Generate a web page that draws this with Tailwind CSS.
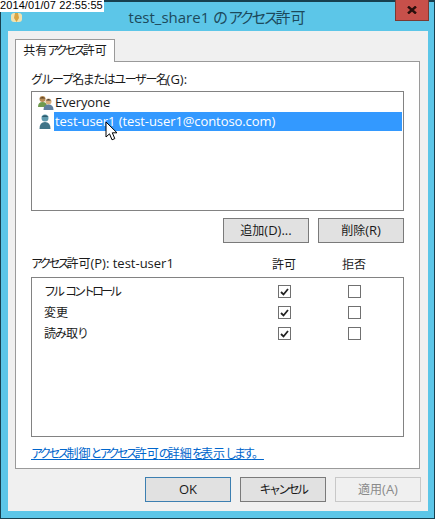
<!DOCTYPE html>
<html lang="ja">
<head>
    <meta charset="UTF-8">
    <title>test_share1 のアクセス許可</title>
    <script src="https://cdn.jsdelivr.net/npm/@tailwindcss/browser@4"></script>
</head>
<body class="w-[435px] h-[519px] overflow-hidden bg-[#5cc6e8] font-['Open_Sans','Noto_Sans_CJK_JP',sans-serif] text-[12px] text-[#1a1a1a]">
    <!-- timestamp burned into the capture -->
    <div class="absolute left-0 top-0 z-10 h-[12px] w-[104px] bg-white font-['Liberation_Sans',sans-serif] text-[11px] leading-[11px] tracking-[0.1px] text-black whitespace-nowrap">2014/01/07 22:55:55</div>

    <div class="relative flex h-[519px] w-[435px] flex-col border border-[#17404f] border-t-2 pb-[7px] pl-[7px] pr-[6px]">
        <!-- title bar -->
        <div class="relative flex h-[29px] shrink-0 items-center justify-center">
            <svg class="absolute left-[2px] top-[10px]" width="13" height="11" viewBox="0 0 13 11">
                <path d="M1 3q1-2 3-2h5q2 0 3 2v4q0 3-3 3H4q-3 0-3-3z" fill="#f0e2b0"/>
                <path d="M5 1h3l1 5-2.500 4L4 6z" fill="#d9a441"/>
            </svg>
            <span class="ml-[-2px] mt-[1px] whitespace-nowrap text-[15px] text-[#1c4a5c]">test_share1 の<span class="tracking-[-3px]">アクセス</span>許可</span>
            <div class="absolute right-[-1px] top-[-2px] flex h-[21px] w-[34px] items-center justify-center border border-[#7a3a32] border-t-0 bg-[#c7504a]">
                <svg width="10" height="8" viewBox="0 0 10 8"><path d="M1 .5l8 7M9 .5l-8 7" stroke="#2a0f0c" stroke-width="2.400"/></svg>
            </div>
        </div>

        <!-- client area -->
        <div class="flex min-h-0 flex-1 flex-col bg-[#f0f0f0] px-[7px] pt-[8px]">
            <div class="relative z-[1] mb-[-1px] flex h-[23px] w-[100px] items-center justify-center whitespace-nowrap border border-b-0 border-[#9a9a9a] bg-white">共有<span class="tracking-[-3px]">アクセス</span>許可</div>

            <div class="flex h-[408px] w-[405px] shrink-0 flex-col border border-[#9a9a9a] bg-white px-[15px]">
                <div class="mt-[7px] h-[21px] whitespace-nowrap leading-[20px]"><span class="tracking-[-1.5px]">グループ名またはユーザー名</span><span class="text-[13px]">(G):</span></div>

                <!-- group list -->
                <div class="relative mt-[1px] h-[120px] w-[373px] shrink-0 border border-[#828282] pl-[5px] pt-[1px]">
                    <div class="flex h-[19px] items-center">
                        <svg width="17" height="16" viewBox="0 0 17 16">
                            <circle cx="5.500" cy="4" r="3" fill="#b98d55"/>
                            <path d="M1 12q0-5 4.500-5t4.500 5z" fill="#6f9a4e"/>
                            <circle cx="11.500" cy="6.500" r="3" fill="#d9ae7c"/>
                            <path d="M2.500 3.500q3-3 6 0z" fill="#5c4326"/>
                            <path d="M9 5.500q2.500-3 5 0z" fill="#3d3a36"/>
                            <path d="M6.500 15q0-5.500 5-5.500t5 5.500z" fill="#5f7f9e"/>
                        </svg>
                        <span class="ml-[1px] text-[13px] leading-[19px] tracking-[-0.1px]">Everyone</span>
                    </div>
                    <div class="flex h-[19px] items-center">
                        <svg width="17" height="18" viewBox="0 0 17 18">
                            <circle cx="8" cy="5" r="3.500" fill="#5d9aae"/>
                            <path d="M4.500 4q3.500-3.500 7 0z" fill="#2f5a6c"/>
                            <path d="M2.500 16q0-7 5.500-7t5.500 7z" fill="#3f7488"/>
                        </svg>
                        <span class="h-[19px] w-[348px] bg-[#3399ff] pl-[1px] text-[13px] leading-[18px] tracking-[-0.08px] text-white">test-user1 (test-user1@contoso.com)</span>
                    </div>
                    <!-- mouse cursor -->
                    <svg class="absolute left-[73px] top-[29px]" width="14" height="21" viewBox="0 0 14 21">
                        <path d="M1 1v15l3.500-3.200 2.500 6 2.800-1.200-2.500-5.800h4.700z" fill="white" stroke="black" stroke-width="1"/>
                    </svg>
                </div>

                <div class="mt-[7px] flex justify-end gap-[9px]">
                    <button class="h-[25px] w-[86px] border border-[#7a7a7a] bg-[#e1e1e1]">追加<span class="text-[13px]">(D)...</span></button>
                    <button class="h-[25px] w-[86px] border border-[#7a7a7a] bg-[#e1e1e1]">削除<span class="text-[13px]">(R)</span></button>
                </div>

                <!-- permissions header -->
                <div class="mt-[10px] flex h-[24px] items-center">
                    <span class="mt-[-3px] w-[218px] whitespace-nowrap"><span class="tracking-[-3px]">アクセス</span>許可<span class="text-[13px]">(P): test-user1</span></span>
                    <span class="w-[70px] text-center">許可</span>
                    <span class="w-[70px] text-center">拒否</span>
                </div>

                <!-- permissions list -->
                <div class="flex h-[160px] w-[373px] shrink-0 flex-col border border-[#828282] pl-[12px] pt-[3px]">
                    <div class="flex h-[21px] items-center">
                        <span class="w-[234px] tracking-[-3px] [word-spacing:3px]">フル コントロール</span>
                        <span class="flex h-[13px] w-[13px] items-center justify-center border border-[#707070]"><svg width="9" height="8" viewBox="0 0 9 8"><path d="M1 4l2.500 2.500L8 1" fill="none" stroke="#222" stroke-width="1.800"/></svg></span>
                        <span class="ml-[57px] h-[13px] w-[13px] border border-[#707070]"></span>
                    </div>
                    <div class="flex h-[21px] items-center">
                        <span class="w-[234px]">変更</span>
                        <span class="flex h-[13px] w-[13px] items-center justify-center border border-[#707070]"><svg width="9" height="8" viewBox="0 0 9 8"><path d="M1 4l2.500 2.500L8 1" fill="none" stroke="#222" stroke-width="1.800"/></svg></span>
                        <span class="ml-[57px] h-[13px] w-[13px] border border-[#707070]"></span>
                    </div>
                    <div class="flex h-[21px] items-center">
                        <span class="w-[234px] tracking-[-1px]">読み取り</span>
                        <span class="flex h-[13px] w-[13px] items-center justify-center border border-[#707070]"><svg width="9" height="8" viewBox="0 0 9 8"><path d="M1 4l2.500 2.500L8 1" fill="none" stroke="#222" stroke-width="1.800"/></svg></span>
                        <span class="ml-[57px] h-[13px] w-[13px] border border-[#707070]"></span>
                    </div>
                </div>

                <a class="mt-[8px] whitespace-nowrap leading-[18px] text-[#0066cc] underline" href="#"><span class="tracking-[-3px]">アクセス</span>制御<span class="tracking-[-3px]">とアクセス</span>許可<span class="tracking-[-3px]">の</span>詳細<span class="tracking-[-3px]">を</span>表示<span class="tracking-[-3px]">します</span>。</a>
            </div>

            <!-- dialog buttons -->
            <div class="mt-[8px] flex justify-end gap-[9px]">
                <button class="h-[25px] w-[86px] border border-[#3c7fb1] bg-[#e1e1e1] text-[13px]">OK</button>
                <button class="h-[25px] w-[86px] border border-[#7a7a7a] bg-[#e1e1e1] tracking-[-2.600px]">キャンセル</button>
                <button class="h-[25px] w-[86px] border border-[#c8c8c8] bg-[#f0f0f0] text-[#8a8a8a]">適用<span class="text-[13px]">(A)</span></button>
            </div>
        </div>
    </div>
</body>
</html>
